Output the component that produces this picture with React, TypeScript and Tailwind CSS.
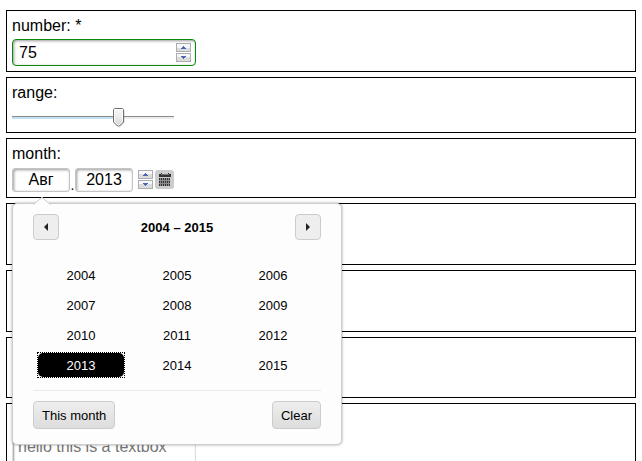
import { useState } from 'react'
import type { ReactNode } from 'react'
import clsx from 'clsx'

const FIRST_YEAR = 2004
const YEARS = Array.from({ length: 12 }, (_, i) => FIRST_YEAR + i)

const FIELD = 'border bg-white text-base leading-5 text-black outline-none'

function Row({ className, children }: { className?: string; children?: ReactNode }) {
  return (
    <div className={clsx('flex flex-col items-start gap-[3px] border border-black p-[5px]', className)}>
      {children}
    </div>
  )
}

function SpinButton({ label, down, onClick }: { label: string; down?: boolean; onClick: () => void }) {
  return (
    <button
      type="button"
      aria-label={label}
      onClick={onClick}
      className="flex h-[9px] w-[15px] items-center justify-center border border-[#abadb3] bg-linear-to-b from-[#f7f7f7] from-50% to-[#dcdcdc] to-50%"
    >
      <svg width="5" height="3" viewBox="0 0 5 3" shapeRendering="crispEdges" fill="#4a63b4">
        {down ? <path d="M0 0h5v1h-1v1h-1v1h-1v-1h-1v-1h-1z" /> : <path d="M2 0h1v1h1v1h1v1h-5v-1h1v-1h1z" />}
      </svg>
    </button>
  )
}

function Spinner({ name, onStep }: { name: string; onStep: (delta: number) => void }) {
  return (
    <div className="flex flex-col gap-px">
      <SpinButton label={`Increase ${name}`} onClick={() => onStep(1)} />
      <SpinButton label={`Decrease ${name}`} down onClick={() => onStep(-1)} />
    </div>
  )
}

function RangeSlider() {
  const [value, setValue] = useState(67)
  // whole pixels keep the thumb outline crisp
  const left = Math.round((151 * value) / 100)

  return (
    <div className="relative h-[21px] w-[162px] pt-[10px]">
      <div className="h-[3px] border-t border-[#8b8b8b] bg-[#ececec]">
        <div className="h-[2px] bg-[#bfe3f5]" style={{ width: `${value}%` }} />
      </div>
      <div className="absolute top-[2px]" style={{ left }}>
        <svg width="12" height="20" viewBox="0 0 12 20">
          <defs>
            <linearGradient id="thumb" x1="0" y1="0" x2="0" y2="1">
              <stop offset="0" stopColor="#fafafa" />
              <stop offset="0.5" stopColor="#ebebeb" />
              <stop offset="1" stopColor="#d4d4d4" />
            </linearGradient>
          </defs>
          <path d="M11 2.500v12l-5 5" fill="none" stroke="#000" strokeOpacity="0.2" />
          <path
            d="M1.500 0.500h8l1 1v12.500l-4 4h-2l-4-4V1.500z"
            fill="url(#thumb)"
            stroke="#707070"
          />
          <path d="M1.500 13.500v-12h8v12l-3.500 3.500h-1z" fill="none" stroke="#fff" strokeOpacity="0.8" />
        </svg>
      </div>
      <input
        id="range"
        type="range"
        value={value}
        onChange={(e) => setValue(Number(e.target.value))}
        className="absolute inset-0 m-0 h-full w-full opacity-0"
      />
    </div>
  )
}

function CalendarIcon() {
  return (
    <svg width="12" height="13" viewBox="0 0 12 13" shapeRendering="crispEdges">
      <path d="M2 0h1v1h6V0h1v1h2v3H0V1h2z" fill="#333" />
      <path d="M2 1h1v1H2zM9 1h1v1H9zM3 1h6v1H3z" fill="#777" />
      <path d="M0 5h11v8H0z" fill="#8a8a8a" />
      <path
        d="M0 5h1v2H0zM2 5h1v2H2zM4 5h1v2H4zM6 5h1v2H6zM8 5h1v2H8zM10 5h1v2h-1zM0 8h1v2H0zM2 8h1v2H2zM4 8h1v2H4zM6 8h1v2H6zM8 8h1v2H8zM10 8h1v2h-1zM0 11h1v2H0zM2 11h1v2H2zM4 11h1v2H4zM6 11h1v2H6zM8 11h1v2H8zM10 11h1v2h-1z"
        fill="#333"
      />
    </svg>
  )
}

function NavButton({ label, next }: { label: string; next?: boolean }) {
  return (
    <button
      type="button"
      aria-label={label}
      className="flex size-[26px] items-center justify-center rounded-[4px] border border-[#ccc] bg-[#eee]"
    >
      <svg width="4" height="8" viewBox="0 0 4 8" fill="#222">
        {next ? <path d="M0 0l4 4-4 4z" /> : <path d="M4 0L0 4l4 4z" />}
      </svg>
    </button>
  )
}

function FooterButton({ children, onClick }: { children: ReactNode; onClick?: () => void }) {
  return (
    <button
      type="button"
      onClick={onClick}
      className="h-7 rounded-[4px] border border-[#ccc] bg-linear-to-b from-[#eee] to-[#ddd] px-2 pt-px"
    >
      {children}
    </button>
  )
}

function YearPicker({ year, onPick }: { year: string; onPick: (year: string) => void }) {
  return (
    <div className="absolute top-full left-[5px] z-10 mt-[6px] w-[330px] rounded-[5px] border border-[#ccc] bg-[#fdfdfd] px-5 pt-[10px] pb-[15px] text-[13px] leading-4 text-black shadow-[0_0_3px_rgba(0,0,0,0.35)]">
      {/* Pointer */}
      <svg className="absolute -top-[7px] left-5" width="18" height="8" viewBox="0 0 18 8">
        <path d="M0 8L9 0l9 8z" fill="#fdfdfd" />
        <path d="M0.500 7.500L9 0.500l8.500 7" fill="none" stroke="#ccc" />
      </svg>

      <div className="flex items-center justify-between">
        <NavButton label="Previous years" />
        <strong className="pt-[2px]">2004 – 2015</strong>
        <NavButton label="Next years" next />
      </div>

      <div className="mt-5 grid grid-cols-3">
        {YEARS.map((y) => {
          const selected = String(y) === year
          return (
            <div key={y} className="px-1 py-[2px]">
              <div className={clsx('border border-dotted', selected ? 'border-black' : 'border-transparent')}>
                <button
                  type="button"
                  aria-pressed={selected}
                  onClick={() => onPick(String(y))}
                  className={clsx('block h-6 w-full rounded-[5px] pt-[2px]', selected && 'bg-black text-white')}
                >
                  {y}
                </button>
              </div>
            </div>
          )
        })}
      </div>

      <div className="mt-[10px] flex justify-between border-t border-[#eaeaea] pt-[10px]">
        <FooterButton onClick={() => onPick('2013')}>This month</FooterButton>
        <FooterButton onClick={() => onPick('')}>Clear</FooterButton>
      </div>
    </div>
  )
}

export default function App() {
  const [number, setNumber] = useState(75)
  const [month, setMonth] = useState('Авг')
  const [year, setYear] = useState('2013')

  const monthField = clsx(
    FIELD,
    'h-6 w-[58px] rounded-[3px] border-[#c4c4c4] text-center shadow-[inset_1px_1px_3px_rgba(0,0,0,0.4)]',
  )

  return (
    <form className="flex h-screen flex-col gap-[5px] overflow-hidden bg-white px-[6px] pt-[10px] font-['Liberation_Sans',Arial,sans-serif] text-base leading-5 text-black *:shrink-0">
      <Row>
        <label htmlFor="number">
          number: <span>*</span>
        </label>
        <div className="flex w-[184px] items-center rounded-[4px] border border-[#0a8a0a] bg-white pr-1 shadow-[inset_1px_1px_3px_rgba(0,0,0,0.4)]">
          <input
            id="number"
            type="number"
            required
            value={number}
            onChange={(e) => setNumber(Number(e.target.value))}
            className="h-[25px] min-w-0 flex-1 bg-transparent pl-[6px] outline-none [appearance:textfield] [&::-webkit-inner-spin-button]:appearance-none"
          />
          <Spinner name="number" onStep={(d) => setNumber(number + d)} />
        </div>
      </Row>

      <Row>
        <label htmlFor="range">range:</label>
        <RangeSlider />
      </Row>

      <Row className="relative">
        <label htmlFor="month">month:</label>
        <div className="flex h-[25px] items-center">
          <input id="month" value={month} onChange={(e) => setMonth(e.target.value)} className={monthField} />
          <span className="w-[5px] self-end text-center text-sm leading-[14px]">.</span>
          <input
            aria-label="year"
            value={year}
            onChange={(e) => setYear(e.target.value)}
            className={monthField}
          />
          <div className="ml-[5px] flex items-center gap-[2px]">
            <Spinner name="year" onStep={(d) => setYear(String(Number(year) + d))} />
            <button
              type="button"
              aria-label="Open calendar"
              className="flex size-[19px] items-center justify-center rounded-[3px] bg-[#ccc]"
            >
              <CalendarIcon />
            </button>
          </div>
        </div>
        <YearPicker year={year} onPick={setYear} />
      </Row>

      <Row className="min-h-[62px]" />
      <Row className="min-h-[62px]" />
      <Row className="min-h-[61px]" />

      <Row className="pt-7">
        <textarea
          aria-label="textbox"
          placeholder="hello this is a textbox"
          className={clsx(
            FIELD,
            'h-16 w-[184px] resize-none rounded-[3px] border-[#ddd] px-[5px] py-1 placeholder:text-[#757575] shadow-[inset_1px_1px_2px_rgba(0,0,0,0.4)]',
          )}
        />
      </Row>
    </form>
  )
}
